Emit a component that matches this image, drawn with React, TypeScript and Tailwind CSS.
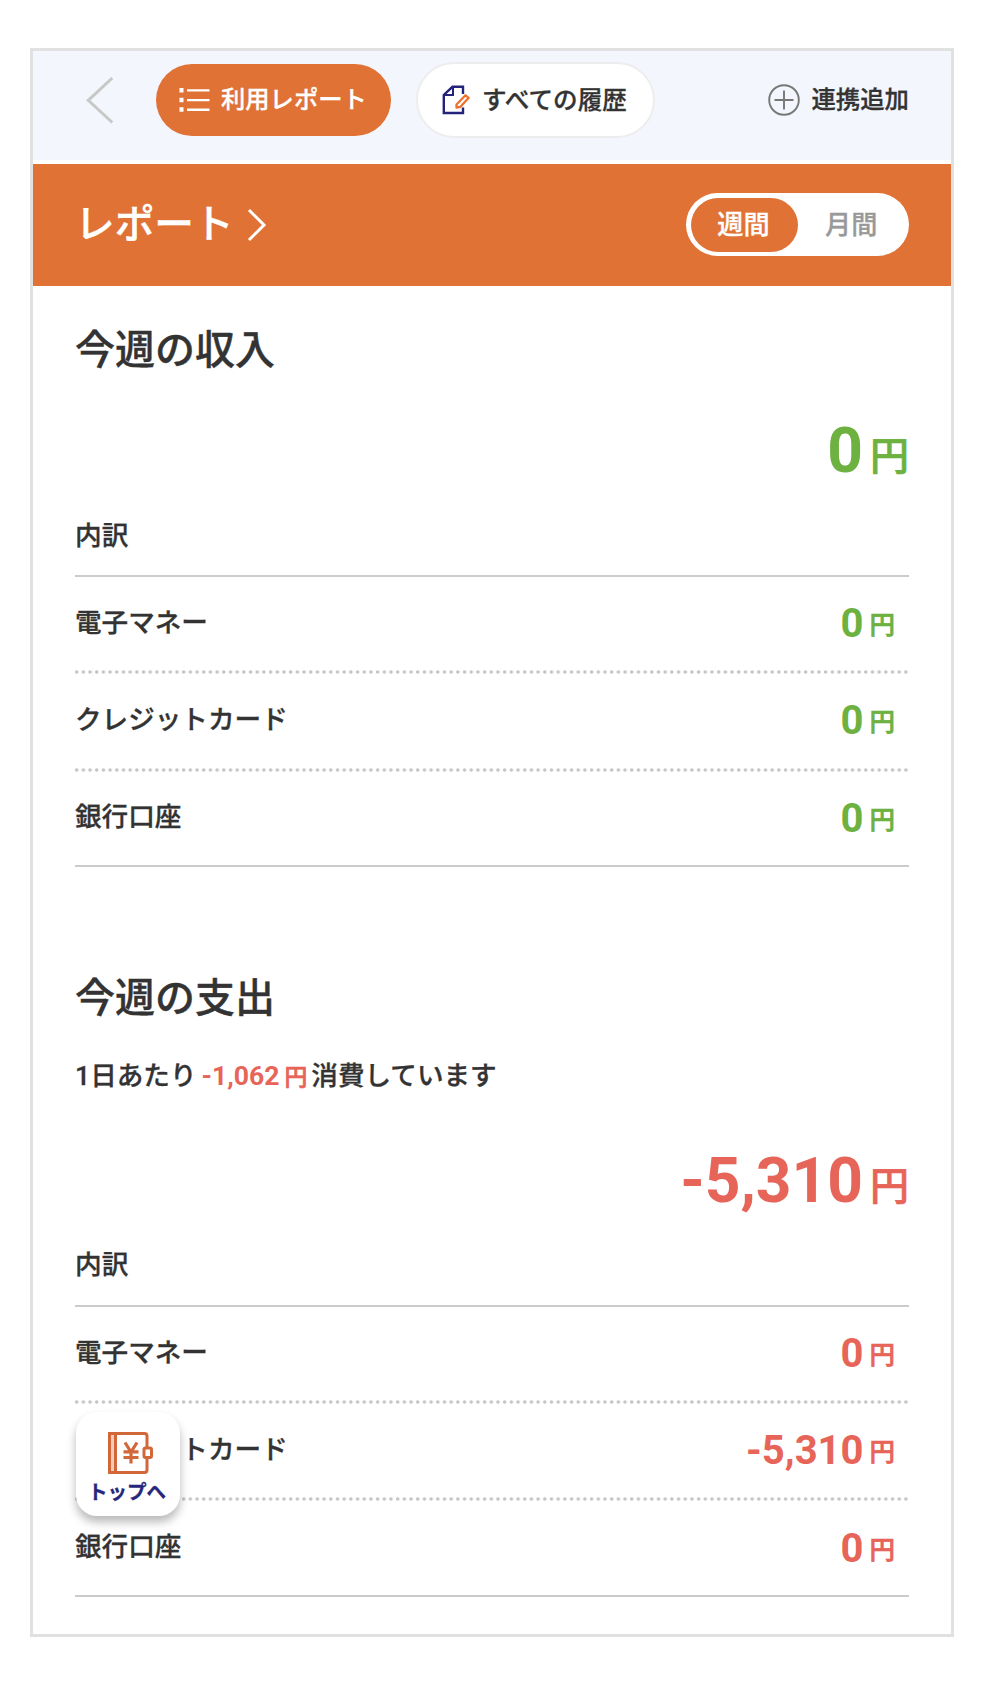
import type { ReactNode } from "react";

const dots =
  "bg-[radial-gradient(circle_at_1.7px_2px,#c6c6c6_1.3px,transparent_2.1px)] bg-[length:6.69px_4px] bg-repeat-x";

type Row = { label: string; value: string };

function Breakdown({ rows, color }: { rows: Row[]; color: string }) {
  return (
    <div className="border-y-2 border-[#cbcbcb]">
      {rows.map((row, i) => (
        <div key={row.label}>
          {i > 0 && <div className={`h-1 ${dots}`} />}
          <div className="flex h-[93.3px] items-center justify-between pr-[14px]">
            <span className="pb-[5px] text-[26.6px] leading-none">{row.label}</span>
            <span
              className={`flex items-baseline pt-px font-['Roboto'] text-[40px] leading-none font-bold [-webkit-text-stroke:0] ${color}`}
            >
              {row.value}
              <Yen className="relative -top-[3px] ml-[6px] text-[25.5px]" />
            </span>
          </div>
        </div>
      ))}
    </div>
  );
}

function Yen({ className }: { className: string }) {
  return (
    <span
      className={`font-['Noto_Sans_CJK_JP'] leading-none font-medium [-webkit-text-stroke:0.7px_currentColor] ${className}`}
    >
      円
    </span>
  );
}

function Total({ value, color }: { value: string; color: string }) {
  return (
    <div
      className={`flex items-baseline justify-end font-['Roboto'] text-[62.3px] leading-[64px] font-bold [-webkit-text-stroke:0] ${color}`}
    >
      {value}
      <Yen className="relative -top-[2px] ml-[7px] text-[39px]" />
    </div>
  );
}

function Heading({ children }: { children: ReactNode }) {
  return <h2 className="text-[40px] leading-[60px] [-webkit-text-stroke:0.4px_currentColor]">{children}</h2>;
}

export default function App() {
  return (
    <div className="h-[1686px] w-[984px] bg-white pt-12 pl-[30px] font-['Noto_Sans_CJK_JP',sans-serif] font-medium text-[#333] [-webkit-text-stroke:0.3px_currentColor]">
      <div className="relative h-[1589px] w-[924px] border-[3px] border-[#e1e1e1] bg-white">
        <header className="flex h-[109px] items-start bg-[#f4f6fe] pt-[11px] pr-[42px] pl-[53px]">
          <svg className="mt-[14px] h-[48px] w-[28px]" viewBox="0 0 28 48" fill="none" stroke="#c8c8c6" strokeWidth="3">
            <path d="M26.3 2 2.3 24.3 26.3 46.5" />
          </svg>
          <div className="mt-[1.5px] ml-[42px] flex h-[72.5px] w-[235px] items-center rounded-full bg-[#e07235] pl-[23px] text-white">
            <svg className="h-[28px] w-[32px]" viewBox="0 0 32 28" fill="#fff">
              <path d="M.5 2h4v4.500h-4zM8 3.200h22.500v2.300H8zM.5 11.700h4v4.500h-4zM8 13h22.500v2.300H8zM.5 21.300h4v4.500h-4zM8 22.600h22.500v2.300H8z" />
            </svg>
            <span className="ml-[10px] pb-[3px] text-[24.3px] leading-none">利用レポート</span>
          </div>
          <div className="ml-[25px] flex h-[75.5px] w-[239px] items-center rounded-full border-2 border-[#ededed] bg-white pl-[24px]">
            <svg className="h-[30px] w-[30px]" viewBox="0 0 30 30" fill="none">
              <path d="M21 9V1.800H10.500L1.800 10V28H21V22.500" stroke="#23237b" strokeWidth="2.4" />
              <path d="M11 2v8H2" stroke="#23237b" strokeWidth="2" />
              <path d="M14.500 19.500 23.500 10.300 26.700 12.800 18.500 21.800 14.500 22.500Z" stroke="#f0702d" strokeWidth="2.3" strokeLinejoin="round" />
            </svg>
            <span className="ml-[10px] pb-[3px] text-[24.6px] leading-none">すべての履歴</span>
          </div>
          <div className="mt-[22px] ml-auto flex items-center">
            <svg className="h-[32px] w-[32px]" viewBox="0 0 32 32" fill="none" stroke="#777" strokeWidth="1.9">
              <circle cx="16" cy="16" r="14.8" />
              <path d="M6.500 16h19M16 6.500v19" />
            </svg>
            <span className="ml-[11px] pb-[3px] text-[24.4px] leading-none">連携追加</span>
          </div>
        </header>

        <div className="mt-[3.5px] flex h-[122.5px] items-center justify-between bg-[#e07235] pr-[42px] pl-[42px] text-white">
          <div className="flex items-center">
            <h1 className="pb-[8px] text-[39.7px] leading-none [-webkit-text-stroke:0.4px_currentColor]">レポート</h1>
            <svg className="ml-[13px] h-[34px] w-[22px]" viewBox="0 0 22 34" fill="none" stroke="#fff" strokeWidth="3">
              <path d="M2 2 17 17 2 32" />
            </svg>
          </div>
          <div className="flex h-[63px] w-[223px] items-center rounded-full bg-white pl-[5px] text-[26.2px] leading-none">
            <div className="flex h-[54px] w-[107px] items-center justify-center rounded-full bg-[#e07235] pr-0.5 pb-[3px]">
              週間
            </div>
            <div className="ml-[27px] pb-[3px] text-[#999]">月間</div>
          </div>
        </div>

        <main className="px-[42px]">
          <section className="pt-[31px]">
            <Heading>今週の収入</Heading>
            <div className="mt-[42px] h-[64px]">
              <Total value="0" color="text-[#6db141]" />
            </div>
            <div className="mt-[30.5px] h-[61.5px] text-[26.7px] leading-[40px]">内訳</div>
            <Breakdown
              color="text-[#6db141]"
              rows={[
                { label: "電子マネー", value: "0" },
                { label: "クレジットカード", value: "0" },
                { label: "銀行口座", value: "0" },
              ]}
            />
          </section>

          <section className="pt-[98px]">
            <Heading>今週の支出</Heading>
            <p className="mt-[29px] flex h-[40px] items-baseline text-[26.6px] leading-[40px]">
              <span className="font-['Roboto',Noto_Sans_CJK_JP]">1</span>日あたり
              <span className="ml-[5px] font-['Roboto'] font-bold text-[#e76458] [-webkit-text-stroke:0]">-1,062</span>
              <Yen className="ml-[5px] text-[22.8px] text-[#e76458]" />
              <span className="ml-1">消費しています</span>
            </p>
            <div className="mt-[55px] h-[64px]">
              <Total value="-5,310" color="text-[#e76458]" />
            </div>
            <div className="mt-[30.5px] h-[61.5px] text-[26.7px] leading-[40px]">内訳</div>
            <Breakdown
              color="text-[#e76458]"
              rows={[
                { label: "電子マネー", value: "0" },
                { label: "クレジットカード", value: "-5,310" },
                { label: "銀行口座", value: "0" },
              ]}
            />
          </section>
        </main>

        <button className="absolute top-[1361px] left-[43px] flex h-[104px] w-[104px] flex-col items-center rounded-[21px] bg-white shadow-[0_6px_10px_rgba(0,0,0,0.28)]">
          <svg className="mt-[20px] ml-[5px] h-[42px] w-[45px]" viewBox="0 0 45 42" fill="none" stroke="#d2683a" strokeWidth="3">
            <path d="M1.500 1.500h6v39h-6z" fill="#f0cdbb" />
            <path d="M39 15V4q0-2.500-2.500-2.500H1.500v39H36.500q2.500 0 2.500-2.500V26" />
            <rect x="36" y="16" width="7.500" height="9.500" rx="1.500" />
            <path d="M17 10.500l6 9.500 6-9.500M15.500 19.800h15M15.500 25.500h15M23 20v11.500" strokeWidth="3.2" />
          </svg>
          <span className="mt-[5px] mr-[2px] text-[19.500px] leading-[24px] font-bold text-[#26267c]">トップへ</span>
        </button>
      </div>
    </div>
  );
}
